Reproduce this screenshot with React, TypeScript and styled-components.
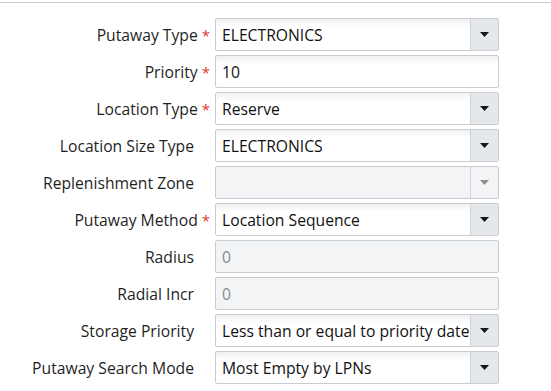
import styled, { createGlobalStyle } from 'styled-components';

type Field = {
  label: string;
  value: string;
  required?: boolean;
  select?: boolean;
  readOnly?: boolean;
};

const fields: Field[] = [
  { label: 'Putaway Type', value: 'ELECTRONICS', required: true, select: true },
  { label: 'Priority', value: '10', required: true },
  { label: 'Location Type', value: 'Reserve', required: true, select: true },
  { label: 'Location Size Type', value: 'ELECTRONICS', select: true },
  { label: 'Replenishment Zone', value: '', select: true, readOnly: true },
  { label: 'Putaway Method', value: 'Location Sequence', required: true, select: true },
  { label: 'Radius', value: '0', readOnly: true },
  { label: 'Radial Incr', value: '0', readOnly: true },
  { label: 'Storage Priority', value: 'Less than or equal to priority date', select: true },
  { label: 'Putaway Search Mode', value: 'Most Empty by LPNs', select: true },
];

export default function App() {
  return (
    <>
      <GlobalStyle />
      <TopRule />
      <Form>
        {fields.map((f) => (
          <Row key={f.label}>
            <Label $required={f.required}>
              {f.label}
              {f.required && <Star>*</Star>}
            </Label>
            <Input $readOnly={f.readOnly}>
              <Value $readOnly={f.readOnly}>{f.value}</Value>
              {f.select && (
                <DropButton $readOnly={f.readOnly}>
                  <svg width="9" height="5" viewBox="0 0 9 5">
                    <path d="M0 0 H9 L4.5 5 Z" fill="currentColor" />
                  </svg>
                </DropButton>
              )}
            </Input>
          </Row>
        ))}
      </Form>
    </>
  );
}

const GlobalStyle = createGlobalStyle`
  body {
    margin: 0;
    background: #fff;
    font-family: "Open Sans", "Noto Sans", sans-serif;
    color: #161513;
  }
`;

const TopRule = styled.div`
  height: 1px;
  margin-top: 2px;
  background-color: #cdccc0;
`;

const Form = styled.div`
  display: flex;
  flex-direction: column;
  gap: 4px;
  padding-top: 15px;
`;

const Row = styled.div`
  display: flex;
  align-items: center;
  height: 33px;
`;

const Label = styled.div<{ $required?: boolean }>`
  display: flex;
  justify-content: flex-end;
  align-items: center;
  width: 215px;
  box-sizing: border-box;
  padding-right: ${({ $required }) => ($required ? '5px' : '21px')};

  font-size: 15.7px;
  color: #1f1f1f;
  white-space: nowrap;
`;

const Star = styled.span`
  margin-left: 4px;
  color: #e0382d;
  font-size: 15px;
`;

const Input = styled.div<{ $readOnly?: boolean }>`
  display: flex;
  width: 284px;
  height: 33px;
  box-sizing: border-box;

  border: 1px solid #c9ccd0;
  border-radius: 2px;
  background: ${({ $readOnly }) =>
    $readOnly ? '#f3f4f6' : 'linear-gradient(#f1f1f1 0, #fff 8px, #fff 100%)'};
  overflow: hidden;
`;

const Value = styled.div<{ $readOnly?: boolean }>`
  flex: 1;
  display: flex;
  align-items: center;
  min-width: 0;
  padding-left: 6px;

  font-size: 15.7px;
  color: ${({ $readOnly }) => ($readOnly ? '#8a8a8a' : '#111')};
  white-space: nowrap;
  overflow: hidden;
`;

const DropButton = styled.div<{ $readOnly?: boolean }>`
  display: flex;
  align-items: center;
  justify-content: center;
  width: 27px;
  flex-shrink: 0;

  border-left: 1px solid #d0d3d7;
  background-color: ${({ $readOnly }) => ($readOnly ? '#f3f4f6' : '#e5e8eb')};
  color: ${({ $readOnly }) => ($readOnly ? '#8f8f8f' : '#161513')};
`;
